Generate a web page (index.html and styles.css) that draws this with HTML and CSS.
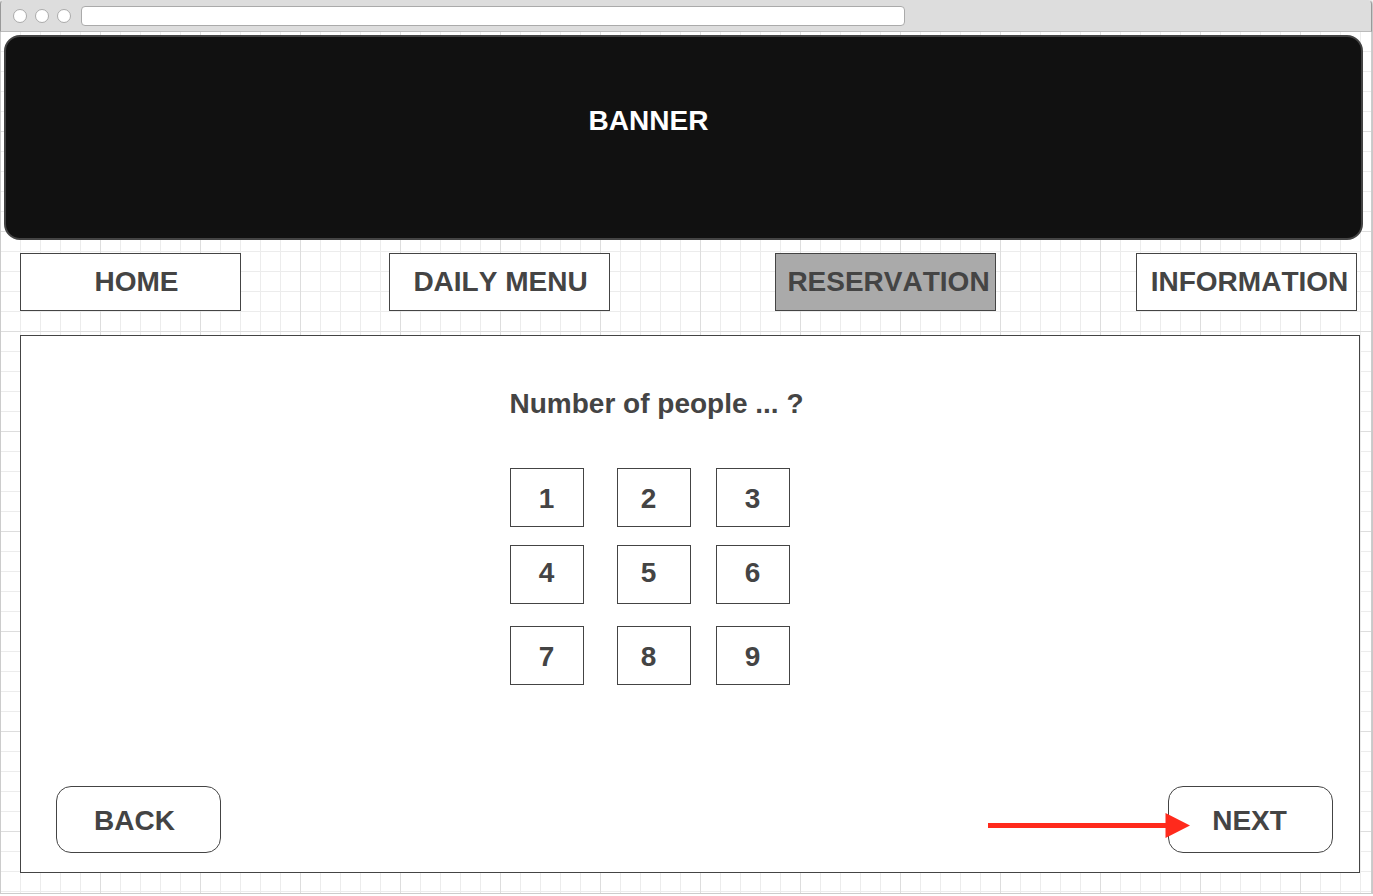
FILE: index.html
```html
<!DOCTYPE html>
<html lang="en">
<head>
<meta charset="utf-8">
<meta name="viewport" content="width=device-width, initial-scale=1">
<title>Reservation</title>
<link rel="stylesheet" href="styles.css">
</head>
<body>
<div class="window">
  <div class="toolbar">
    <span class="dot"></span>
    <span class="dot"></span>
    <span class="dot"></span>
    <input class="address" type="text" aria-label="Address">
  </div>
  <div class="page">
    <header class="banner"><h1 class="banner-title">BANNER</h1></header>
    <nav class="nav">
      <a class="nav-link nav-home" href="#home">HOME</a>
      <a class="nav-link nav-menu" href="#menu">DAILY MENU</a>
      <a class="nav-link nav-reservation" href="#reservation" aria-current="page">RESERVATION</a>
      <a class="nav-link nav-information" href="#information">INFORMATION</a>
    </nav>
    <main class="panel">
      <section class="picker">
        <h2 class="question">Number of people ... ?</h2>
        <div class="keypad">
          <button class="key" type="button">1</button>
          <button class="key key-middle" type="button">2</button>
          <button class="key" type="button">3</button>
          <button class="key key-raised" type="button">4</button>
          <button class="key key-middle key-raised" type="button">5</button>
          <button class="key key-raised" type="button">6</button>
          <button class="key" type="button">7</button>
          <button class="key key-middle" type="button">8</button>
          <button class="key" type="button">9</button>
        </div>
      </section>
      <div class="steps">
        <button class="step step-back" type="button">BACK</button>
        <div class="next-wrap">
          <button class="step step-next" type="button">NEXT</button>
          <svg class="arrow" width="202" height="25" viewBox="0 0 202 25" aria-hidden="true">
            <path d="M0 10H177.500V0L202 12.500L177.500 25V15H0Z" fill="#ff2a1c"/>
          </svg>
        </div>
      </div>
    </main>
  </div>
</div>
</body>
</html>
```

FILE: styles.css
```css
* {
  box-sizing: border-box;
}

body {
  margin: 0;
  color: #444;
  font: bold 28px/32px "Liberation Sans", Arial, sans-serif;
  font-kerning: none;
  background: #fff;
}

h1,
h2 {
  margin: 0;
  font: inherit;
}

button {
  padding: 0;
  color: inherit;
  font: inherit;
  font-kerning: none;
  background: #fff;
  border: 1px solid #444;
}

.window {
  display: flex;
  flex-direction: column;
  min-height: calc(100vh - 2px);
  margin-right: 1px;
  border-radius: 4px 4px 0 0;
  box-shadow: 0 1px 3px 1px #aaa;
}

.toolbar {
  display: flex;
  align-items: center;
  gap: 8px;
  height: 32px;
  padding: 0 12px;
  background: #ddd;
  border: 1px solid #999;
  border-top-color: #ddd;
  border-bottom-color: #bbb;
  border-radius: 4px 4px 0 0;
}

.dot {
  width: 14px;
  height: 14px;
  background: #fff;
  border: 1px solid #aaa;
  border-radius: 50%;
}

.address {
  width: 60vw;
  height: 20px;
  margin-left: 2px;
  padding: 0 6px;
  font: 13px "Liberation Sans", Arial, sans-serif;
  background: #fff;
  border: 1px solid #aaa;
  border-radius: 4px;
}

.page {
  display: flex;
  flex: 1;
  flex-direction: column;
  padding: 3px 0 20px;
  background-color: #fff;
  background-image:
    linear-gradient(90deg, #ddd 1px, transparent 1px),
    linear-gradient(#ddd 1px, transparent 1px),
    linear-gradient(90deg, #ececec 1px, transparent 1px),
    linear-gradient(#ececec 1px, transparent 1px);
  background-position: -1px -1px;
  background-size: 100px 100px, 100px 100px, 20px 20px, 20px 20px;
  border: 1px solid #ccc;
  border-top: 0;
}

.banner {
  display: flex;
  justify-content: center;
  height: 205px;
  margin: 0 8px 0 3px;
  padding: 68px 70px 0 0;
  color: #fff;
  background: #111;
  border: 2px solid #444;
  border-radius: 16px;
}

.nav {
  display: grid;
  grid-template-columns: 221px 148fr 221px 165fr 221px 140fr 221px;
  margin: 13px 14px 24px 19px;
}

.nav-link {
  display: flex;
  align-items: center;
  justify-content: center;
  height: 58px;
  color: inherit;
  text-decoration: none;
  background: #fff;
  border: 1px solid #444;
}

.nav-home {
  padding-left: 12px;
}

.nav-menu {
  grid-column: 3;
  padding-left: 2px;
}

.nav-reservation {
  grid-column: 5;
  padding-left: 6px;
}

.nav-information {
  grid-column: 7;
  padding-left: 6px;
}

.nav-link[aria-current] {
  background: #aaa;
}

.panel {
  display: flex;
  flex: 1;
  flex-direction: column;
  justify-content: space-between;
  gap: 32px;
  margin: 0 11px 0 19px;
  padding: 52px 26px 19px 35px;
  background: #fff;
  border: 1px solid #444;
}

.picker {
  align-self: center;
  width: 300px;
  margin-right: 70px;
}

.question {
  white-space: nowrap;
}

.keypad {
  display: grid;
  grid-template-rows: 59px 18px 59px 22px 59px;
  grid-template-columns: 74px 33px 74px 25px 74px;
  margin-top: 48px;
}

.key {
  grid-column: 1;
  padding-top: 2px;
}

.key:nth-child(3n + 2) {
  grid-column: 3;
}

.key:nth-child(3n) {
  grid-column: 5;
}

.key:nth-child(n + 4) {
  grid-row: 3;
}

.key:nth-child(n + 7) {
  grid-row: 5;
}

.key-middle {
  padding-right: 10px;
}

.key-raised {
  padding-top: 0;
  padding-bottom: 4px;
}

.steps {
  display: flex;
  justify-content: space-between;
}

.step {
  display: block;
  width: 165px;
  height: 67px;
  padding-top: 2px;
  border-radius: 15px;
}

.step-back {
  padding-right: 8px;
}

.step-next {
  padding-right: 2px;
}

.next-wrap {
  position: relative;
}

.arrow {
  position: absolute;
  top: 27px;
  right: 143px;
}
```
